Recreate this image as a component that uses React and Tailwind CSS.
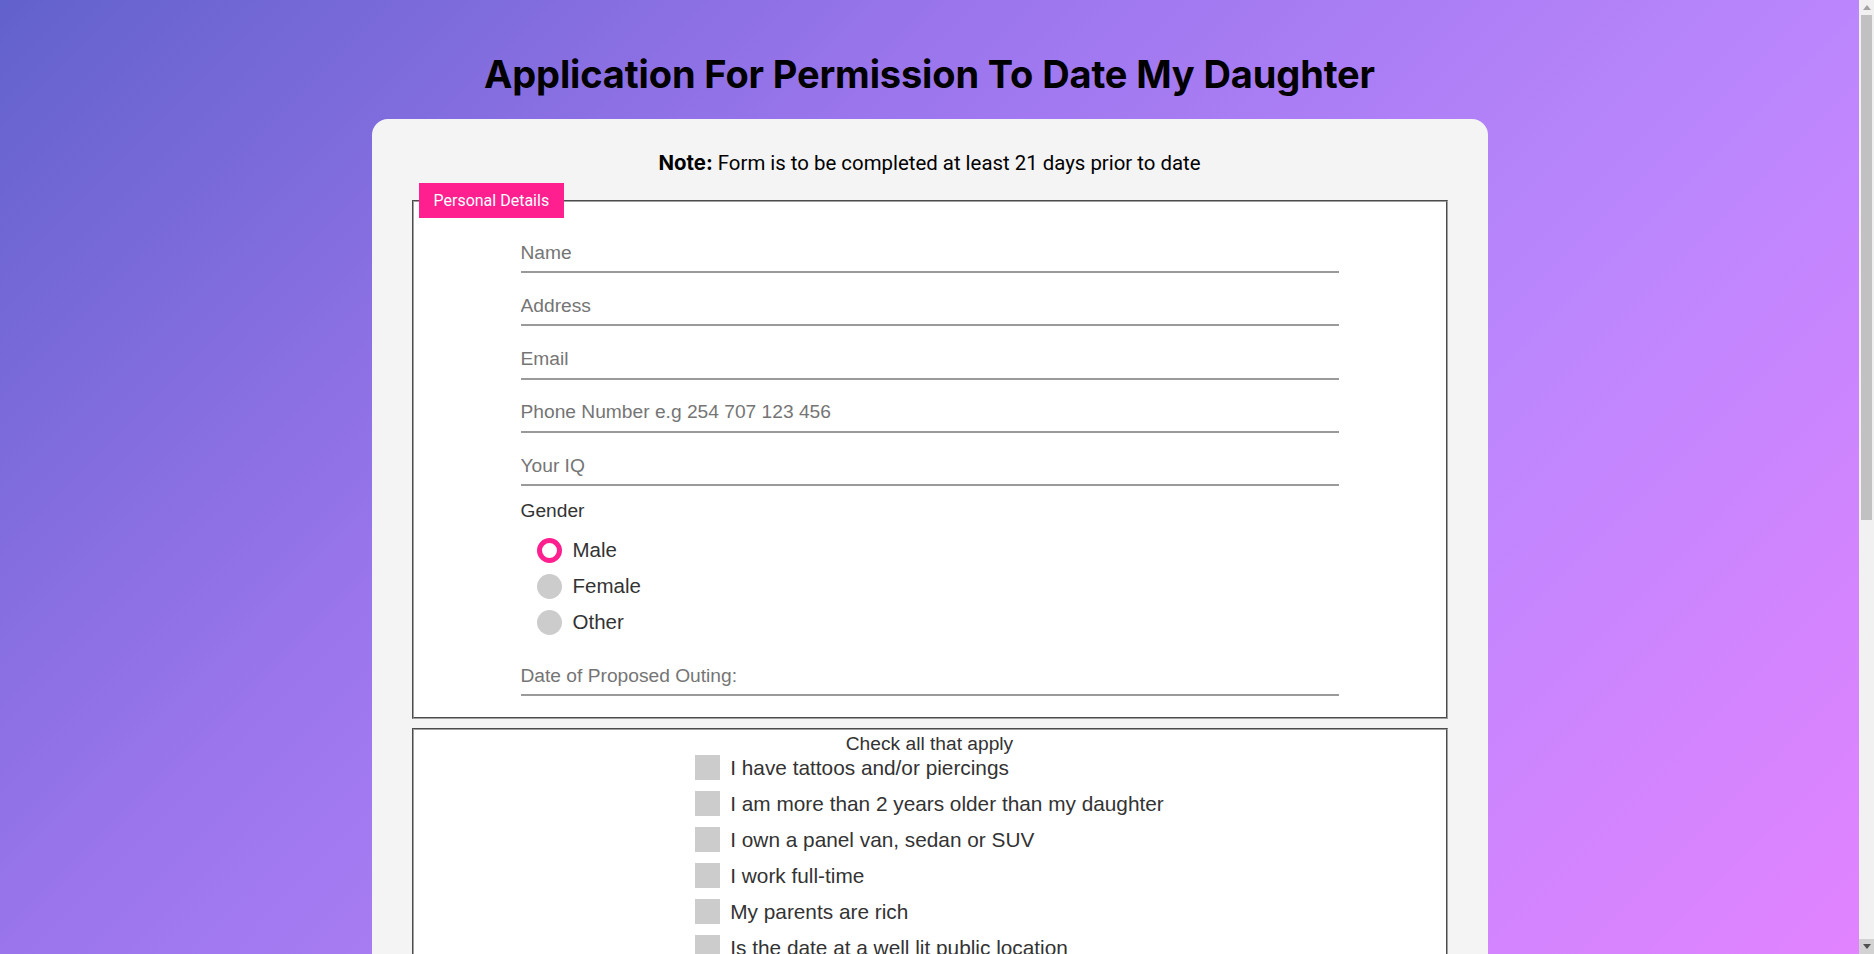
import { useState } from "react";

const fields = ["Name", "Address", "Email", "Phone Number e.g 254 707 123 456", "Your IQ"];

const checks = [
    "I have tattoos and/or piercings",
    "I am more than 2 years older than my daughter",
    "I own a panel van, sedan or SUV",
    "I work full-time",
    "My parents are rich",
    "Is the date at a well lit public location",
    "I will have her home before 10 pm",
    "I have a valid driver's licence",
    "I have been arrested before",
];

function Field({ placeholder }) {
    return (
        <input
            type="text"
            placeholder={placeholder}
            className="block w-[818px] h-[42px] pt-[3px] border-b-2 border-[#9a9a9a] bg-transparent text-[19.2px] text-[#333] outline-none placeholder:text-[#757575]"
        />
    );
}

export default function App() {
    const [gender, setGender] = useState("Male");
    const [checked, setChecked] = useState({});

    return (
        <div className="flex h-screen font-['Liberation_Sans',Arial,sans-serif]">
            {/* page */}
            <div className="flex-1 overflow-y-auto bg-[linear-gradient(135deg,#6262cc_0%,#9a75ec_34%,#bb86fd_66%,#e283ff_100%)]">
                <div className="pb-[60px]">
                    {/* page title */}
                    <h1 className="pt-[51px] text-center text-[38px] leading-[46px] font-bold text-black font-['Inter',sans-serif] tracking-[-0.13px]">
                        Application For Permission To Date My Daughter
                    </h1>

                    {/* form card */}
                    <div className="mx-auto mt-[22px] w-[1116px] rounded-2xl bg-[#f4f4f4] px-10 pt-[29px] pb-10">
                        <p className="text-center text-[20.4px] leading-[30px] text-black font-['Roboto',sans-serif]">
                            <b className="font-['Inter',sans-serif] font-bold">Note:</b> Form is to be completed
                            at least 21 days prior to date
                        </p>

                        {/* personal details */}
                        <fieldset className="mt-[5px] border-2 border-[#a0a0a0] [border-style:groove] bg-white pb-[21px]">
                            <legend className="ml-[5px] h-[35px] bg-[#ff1f8f] px-[15px] text-[16px] leading-[35px] text-white font-['Roboto',sans-serif]">
                                Personal Details
                            </legend>

                            <div className="ml-[107px] pt-[13px] flex flex-col gap-[11.3px]">
                                {fields.map((f) => (
                                    <Field key={f} placeholder={f} />
                                ))}
                            </div>

                            <div className="ml-[107px] mt-[14px] text-[19.2px] leading-[22px] text-[#333]">Gender</div>
                            <div className="ml-[123px] mt-[16px] flex flex-col gap-[11px]">
                                {["Male", "Female", "Other"].map((g) => (
                                    <label
                                        key={g}
                                        onClick={() => setGender(g)}
                                        className="flex h-[25px] items-center gap-[11px] text-[20.5px] text-[#333] cursor-pointer"
                                    >
                                        <span
                                            className={`size-[25px] rounded-full ${
                                                gender === g ? "border-[5px] border-[#ff1f8f] bg-white" : "bg-[#cccccc]"
                                            }`}
                                        />
                                        {g}
                                    </label>
                                ))}
                            </div>

                            <div className="ml-[107px] mt-[19px]">
                                <Field placeholder="Date of Proposed Outing:" />
                            </div>
                        </fieldset>

                        {/* checklist */}
                        <fieldset className="mt-[9px] border-2 border-[#a0a0a0] [border-style:groove] bg-white pb-[20px]">
                            <div className="mt-[3px] text-center text-[19.2px] leading-[22px] text-[#333]">
                                Check all that apply
                            </div>
                            <div className="mx-auto w-fit flex flex-col gap-[11px]">
                                {checks.map((c) => (
                                    <label
                                        key={c}
                                        onClick={() => setChecked({ ...checked, [c]: !checked[c] })}
                                        className="flex h-[25px] items-center gap-[10px] text-[20.8px] text-[#333] cursor-pointer"
                                    >
                                        <span
                                            className={`size-[25px] ${checked[c] ? "bg-[#ff1f8f]" : "bg-[#cccccc]"}`}
                                        />
                                        {c}
                                    </label>
                                ))}
                            </div>
                        </fieldset>

                        {/* essay */}
                        <fieldset className="mt-[10px] border-2 border-[#a0a0a0] [border-style:groove] bg-white pb-[24px]">
                            <legend className="ml-[5px] h-[35px] bg-[#ff1f8f] px-[15px] text-[16px] leading-[35px] text-white font-['Roboto',sans-serif]">
                                In Your Own Words
                            </legend>
                            <div className="ml-[107px] pt-[13px] flex flex-col gap-2">
                                <div className="text-[19.2px] text-[#333]">
                                    Why should I allow you to date my daughter?
                                </div>
                                <textarea className="w-[818px] h-[160px] border-2 border-[#cccccc] p-2 text-[18px] outline-none" />
                            </div>
                        </fieldset>

                        <div className="mt-8 flex justify-center">
                            <button className="h-[48px] w-[220px] bg-[#ff1f8f] text-[18px] text-white font-['Roboto',sans-serif]">
                                Submit Application
                            </button>
                        </div>
                    </div>
                </div>
            </div>

            {/* scrollbar */}
            <div className="flex w-[15px] flex-col bg-[#f1f1f1]">
                <div className="flex h-[15px] items-center justify-center">
                    <svg width="8" height="5" viewBox="0 0 8 5">
                        <path d="M4 0 L8 5 L0 5 Z" fill="#a3a3a3" />
                    </svg>
                </div>
                <div className="mx-[2px] h-[505px] bg-[#c1c1c1]" />
                <div className="flex-1" />
                <div className="flex h-[15px] items-center justify-center bg-[#d2d2d2]">
                    <svg width="8" height="5" viewBox="0 0 8 5">
                        <path d="M0 0 L8 0 L4 5 Z" fill="#505050" />
                    </svg>
                </div>
            </div>
        </div>
    );
}
